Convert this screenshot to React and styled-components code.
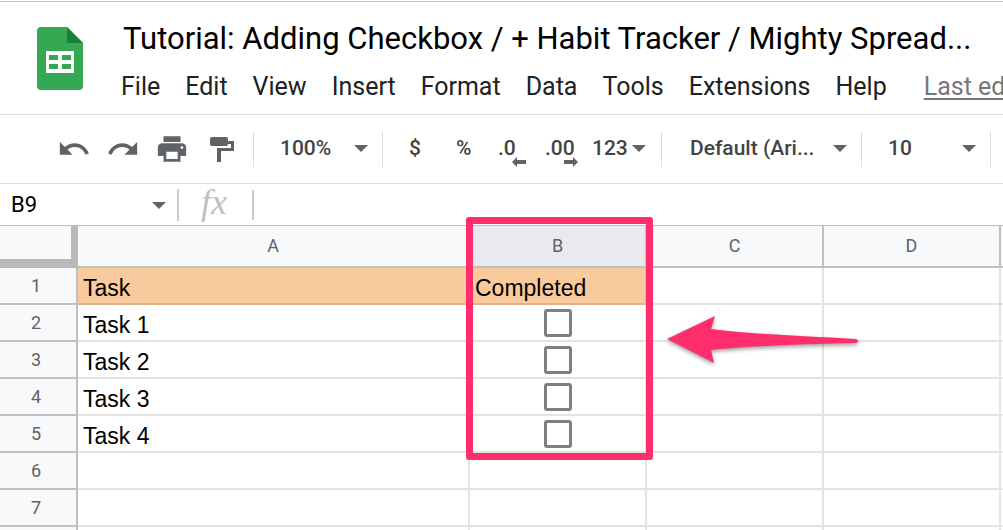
import React from 'react';
import styled, { createGlobalStyle } from 'styled-components';
import { MdUndo, MdRedo, MdPrint } from 'react-icons/md';

const menus = ['File', 'Edit', 'View', 'Insert', 'Format', 'Data', 'Tools', 'Extensions', 'Help'];

const rows = [
  { task: 'Task', done: 'Completed', heading: true },
  { task: 'Task 1', checkbox: true },
  { task: 'Task 2', checkbox: true },
  { task: 'Task 3', checkbox: true },
  { task: 'Task 4', checkbox: true },
  {},
  {},
];

const App = () => (
  <Page>
    <GlobalStyle />

    {/* Document header */}
    <Header>
      <Logo />
      <HeaderText>
        <Title>Tutorial: Adding Checkbox / + Habit Tracker / Mighty Spread...</Title>
        <MenuBar>
          {menus.map((name) => (
            <MenuButton key={name} type="button">{name}</MenuButton>
          ))}
          <LastEdit href="#history">Last ed</LastEdit>
        </MenuBar>
      </HeaderText>
    </Header>

    {/* Toolbar */}
    <Toolbar>
      <IconGroup>
        <ToolButton type="button" aria-label="Undo" $width={49}><MdUndo size={34} /></ToolButton>
        <ToolButton type="button" aria-label="Redo" $width={49}><MdRedo size={34} /></ToolButton>
        <ToolButton type="button" aria-label="Print" $width={55}><MdPrint size={34} /></ToolButton>
        <ToolButton type="button" aria-label="Paint format"><PaintIcon /></ToolButton>
      </IconGroup>
      <DropButton type="button" $width={129} $pad={26}>100%<Caret /></DropButton>
      <FormatGroup>
        <ToolButton type="button" $width={47}>$</ToolButton>
        <ToolButton type="button" $width={42}>%</ToolButton>
        <ToolButton type="button" aria-label="Decrease decimal places" $width={47}>
          .0<DecimalArrow />
        </ToolButton>
        <ToolButton type="button" aria-label="Increase decimal places" $width={47}>
          .00<DecimalArrow $right />
        </ToolButton>
        <ToolButton type="button">123<Caret /></ToolButton>
      </FormatGroup>
      <DropButton type="button" $width={200} $pad={28}>Default (Ari...<Caret /></DropButton>
      <DropButton type="button" $width={129} $pad={26}>10<Caret /></DropButton>
    </Toolbar>

    {/* Name box and formula */}
    <FormulaBar>
      <NameBox aria-label="Name box" defaultValue="B9" />
      <NameCaret type="button" aria-label="Named ranges"><Caret /></NameCaret>
      <FxLabel htmlFor="formula">fx</FxLabel>
      <FormulaInput id="formula" />
    </FormulaBar>

    {/* Grid */}
    <Sheet>
      <Grid>
        <colgroup>
          <Col $width={78} />
          <Col $width={392} />
          <Col $width={177} />
          <Col $width={177} />
          <Col $width={177} />
          <col />
        </colgroup>
        <thead>
          <tr>
            <Corner />
            <ColumnHead>A</ColumnHead>
            <ColumnHead $active>B<Highlight /></ColumnHead>
            <ColumnHead>C</ColumnHead>
            <ColumnHead>D</ColumnHead>
            <ColumnHead />
          </tr>
        </thead>
        <tbody>
          {rows.map((row, idx) => (
            <tr key={idx}>
              <RowHead scope="row">{idx + 1}</RowHead>
              <Cell $fill={row.heading}>{row.task}</Cell>
              <Cell $fill={row.heading} $center={row.checkbox}>
                {row.done}
                {row.checkbox && <Checkbox type="checkbox" aria-label={`${row.task} completed`} />}
              </Cell>
              <Cell />
              <Cell />
              <Cell />
            </tr>
          ))}
          {/* Blank row that runs off the bottom of the window */}
          <tr>
            <RowHead />
            <Cell />
            <Cell />
            <Cell />
            <Cell />
            <Cell />
          </tr>
        </tbody>
      </Grid>
      <Arrow />
    </Sheet>
  </Page>
);

export default App;

// Drawings

const Logo = () => (
  <LogoSvg viewBox="0 0 46 63" aria-label="Sheets">
    <path fill="#34a853" d="M4 0h26l16 16v43a4 4 0 0 1-4 4H4a4 4 0 0 1-4-4V4a4 4 0 0 1 4-4z" />
    <path fill="#188038" d="M30 0l16 16H30z" />
    <path fill="#fff" fillRule="evenodd" d="M9 24h28v22H9zM12 28v5h9v-5zM25 28v5h9v-5zM12 37v5h9v-5zM25 37v5h9v-5z" />
  </LogoSvg>
);

const PaintIcon = () => (
  <svg width="24" height="25" viewBox="0 0 24 25" fill="currentColor">
    <path d="M2 0h14a2 2 0 0 1 2 2v2h6v10H11v11H7V11h14V7h-3a2 2 0 0 1-2 2H2a2 2 0 0 1-2-2V2a2 2 0 0 1 2-2z" />
  </svg>
);

const Caret = () => (
  <svg width="14" height="7" viewBox="0 0 14 7" fill="currentColor">
    <path d="M0 0h14L7 7z" />
  </svg>
);

const DecimalArrow = ({ $right }) => (
  <ArrowMark width="14" height="10" viewBox="0 0 14 10" $right={$right}>
    <path fill="currentColor" d={$right ? 'M14 5L9 0v3H0v4h9v3z' : 'M0 5l5-5v3h9v4H5v3z'} />
  </ArrowMark>
);

const Arrow = () => (
  <ArrowSvg width="200" height="60" viewBox="0 0 200 60">
    <path
      fill="#ff2d6c"
      d="M0 24L48 1L44 14C80 19 140 21 188 24Q191 24 191 26Q191 28 188 28C140 29 80 31 44 35L47 48Z"
    />
  </ArrowSvg>
);

// Styled Components

const GlobalStyle = createGlobalStyle`
  * { box-sizing: border-box; }
  body { margin: 0; background: #fff; overflow: hidden; }
  button, input { font: inherit; color: inherit; border: 0; padding: 0; margin: 0; background: none; }
  svg { flex-shrink: 0; }
`;

const Page = styled.div`
  height: 100vh;
  overflow: hidden;
  padding-top: 1px;
  font-family: Roboto, 'Liberation Sans', sans-serif;
  color: #202124;
`;

const Header = styled.header`
  display: flex;
  align-items: flex-start;
  gap: 38px;
  height: 114px;
  padding: 19px 0 0 37px;
  border-top: 1px solid #c7c7c7;
  border-bottom: 1px solid #dadce0;
`;

const LogoSvg = styled.svg`
  width: 46px;
  height: 63px;
  margin-top: 6px;
`;

const HeaderText = styled.div`
  flex: 1;
  min-width: 0;
`;

const Title = styled.h1`
  margin: 0;
  padding-left: 2px;
  font-family: Roboto, sans-serif;
  font-size: 31px;
  line-height: 36px;
  font-weight: 400;
  color: #000;
  white-space: nowrap;
`;

const MenuBar = styled.nav`
  display: flex;
  gap: 25px;
  margin-top: 14px;
  font-size: 25px;
  line-height: 32px;
  white-space: nowrap;
`;

const MenuButton = styled.button``;

const LastEdit = styled.a`
  margin-left: 12px;
  color: #777;
  text-underline-offset: 3px;
`;

const Toolbar = styled.div`
  display: flex;
  align-items: center;
  height: 69px;
  border-bottom: 1px solid #dadce0;
  font-size: 21px;
  font-weight: 500;
  color: #444;
  white-space: nowrap;

  svg { color: #5f6368; }
`;

const Group = styled.div`
  display: flex;
  align-items: center;
  height: 35px;
  border-right: 1px solid #dadce0;
`;

const IconGroup = styled(Group)`
  width: 254px;
  padding-left: 57px;
`;

const FormatGroup = styled(Group)`
  width: 279px;
  padding: 0 0 2px 26px;
`;

const ToolButton = styled.button`
  position: relative;
  display: flex;
  align-items: center;
  gap: 4px;
  width: ${({ $width }) => ($width ? `${$width}px` : 'auto')};
`;

const ArrowMark = styled.svg`
  position: absolute;
  left: ${({ $right }) => ($right ? 19 : 14)}px;
  bottom: -7px;
`;

const DropButton = styled.button`
  display: flex;
  align-items: center;
  justify-content: space-between;
  width: ${({ $width }) => $width}px;
  height: 35px;
  padding: 0 14px 2px ${({ $pad }) => $pad}px;
  border-right: 1px solid #dadce0;
`;

const FormulaBar = styled.div`
  display: flex;
  align-items: center;
  height: 42px;
  border-bottom: 1px solid #c0c0c0;
  color: #000;
`;

const NameBox = styled.input`
  width: 152px;
  padding-left: 11px;
  font-size: 22px;
`;

const NameCaret = styled.button`
  display: flex;
  align-items: center;
  width: 27px;
  height: 32px;
  padding-top: 2px;
  border-right: 2px solid #ccc;
  color: #5f6368;
`;

const FxLabel = styled.label`
  width: 75px;
  padding: 0 0 6px 22px;
  border-right: 2px solid #ccc;
  font: italic 36px/24px 'Liberation Serif', serif;
  color: #bdc1c6;
`;

const FormulaInput = styled.input`
  flex: 1;
  min-width: 0;
  padding-left: 12px;
  font-size: 22px;
`;

const Sheet = styled.main`
  position: relative;
`;

const Grid = styled.table`
  width: 100%;
  table-layout: fixed;
  border-collapse: separate;
  border-spacing: 0;
`;

const Col = styled.col`
  width: ${({ $width }) => $width}px;
`;

const ColumnHead = styled.th`
  position: relative;
  height: 42px;
  padding: 0 0 2px;
  border-right: 2px solid #c0c0c0;
  border-bottom: 2px solid #c0c0c0;
  background: ${({ $active }) => ($active ? '#e8eaed' : '#f8f9fa')};
  font-size: 18px;
  font-weight: 400;
  color: #5f6368;

  &:last-child { border-right: 0; }
`;

const Corner = styled.td`
  padding: 0;
  border-right: 7px solid #b9b9b9;
  border-bottom: 9px solid #b9b9b9;
  background: #f8f9fa;
`;

const RowHead = styled.th`
  padding: 0 4px 0 0;
  border-right: 2px solid #c0c0c0;
  border-bottom: 2px solid #c0c0c0;
  background: #f8f9fa;
  font-size: 18px;
  font-weight: 400;
  color: #5f6368;
`;

const Cell = styled.td`
  height: 37px;
  padding: ${({ $center }) => ($center ? '0' : '4px 0 0 5px')};
  border-right: 2px solid ${({ $fill }) => ($fill ? '#e0b48a' : '#e2e3e3')};
  border-bottom: 2px solid ${({ $fill }) => ($fill ? '#e0b48a' : '#e2e3e3')};
  background: ${({ $fill }) => ($fill ? '#f9cb9c' : '#fff')};
  font-family: 'Liberation Sans', Arial, sans-serif;
  font-size: 23px;
  line-height: 30px;
  text-align: ${({ $center }) => ($center ? 'center' : 'left')};
  color: #000;

  &:last-child { padding: 0; border-right: 0; }
`;

const Checkbox = styled.input`
  appearance: none;
  display: block;
  width: 28px;
  height: 28px;
  margin: 0 auto;
  border: 3px solid #808080;
  border-radius: 3px;
`;

const Highlight = styled.span`
  position: absolute;
  z-index: 1;
  top: -9px;
  left: -4px;
  width: 187px;
  height: 243px;
  border: 7px solid #ff2d6c;
  border-radius: 3px;
  pointer-events: none;
`;

const ArrowSvg = styled.svg`
  position: absolute;
  top: 89px;
  left: 667px;
  filter: drop-shadow(0 2px 2px rgba(0, 0, 0, 0.4));
`;
